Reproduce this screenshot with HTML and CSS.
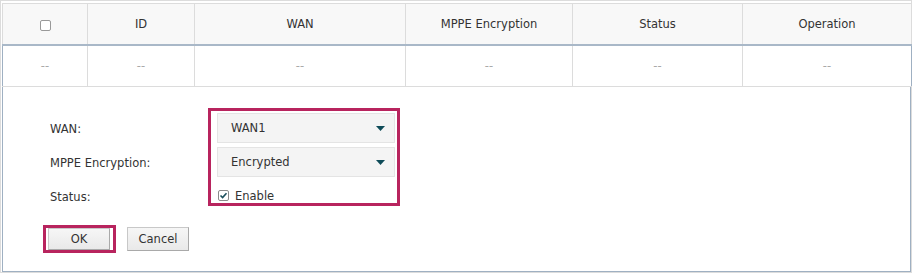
FILE: index.html
```html
<!DOCTYPE html>
<html lang="en">
<head>
    <meta charset="UTF-8">
    <title>PPTP Server</title>
    <link rel="stylesheet" href="styles.css">
</head>
<body>

    <div class="panel">
        <table class="grid">
            <colgroup>
                <col style="width: 85px">
                <col style="width: 107px">
                <col style="width: 211px">
                <col style="width: 167px">
                <col style="width: 170px">
                <col style="width: 169px">
            </colgroup>
            <thead>
                <tr>
                    <th><span class="checkbox"></span></th>
                    <th>ID</th>
                    <th>WAN</th>
                    <th>MPPE Encryption</th>
                    <th>Status</th>
                    <th>Operation</th>
                </tr>
            </thead>
            <tbody>
                <tr>
                    <td>--</td>
                    <td>--</td>
                    <td>--</td>
                    <td>--</td>
                    <td>--</td>
                    <td>--</td>
                </tr>
            </tbody>
        </table>

        <div class="editor">
            <div class="form-body">
                <div class="labels">
                    <div class="label-row">WAN:</div>
                    <div class="label-row">MPPE Encryption:</div>
                    <div class="label-row">Status:</div>
                </div>
                <div class="field-box">
                    <div class="select">
                        <span>WAN1</span>
                        <svg class="arrow" width="9" height="5" viewBox="0 0 9 5"><path d="M0 0H9L4.5 5Z" fill="#0e4b58"/></svg>
                    </div>
                    <div class="select">
                        <span>Encrypted</span>
                        <svg class="arrow" width="9" height="5" viewBox="0 0 9 5"><path d="M0 0H9L4.5 5Z" fill="#0e4b58"/></svg>
                    </div>
                    <label class="check-row">
                        <span class="checkbox checked">
                            <svg width="9" height="9" viewBox="0 0 9 9"><path d="M1.5 4.5L3.6 6.6L7.5 2.2" fill="none" stroke="#1b4f5c" stroke-width="1.6"/></svg>
                        </span>
                        Enable
                    </label>
                </div>
            </div>

            <div class="actions">
                <div class="ok-box">
                    <button type="button" class="btn">OK</button>
                </div>
                <button type="button" class="btn cancel">Cancel</button>
            </div>
        </div>
    </div>

</body>
</html>
```

FILE: styles.css
```css
body {
    margin: 0;
    font-family: "DejaVu Sans", Verdana, sans-serif;
    font-size: 11.5px;
    color: #333;
    background: #fff;
}
.panel {
    width: 912px;
    box-sizing: border-box;
    border: 1px solid #dcdcdc;
    padding: 2px 0 0 1px;
}
.grid {
    width: 909px;
    border-collapse: collapse;
    table-layout: fixed;
}
.grid th {
    height: 39px;
    padding: 0 0 1px;
    background: #f8f8f8;
    border: 1px solid #dcdcdc;
    border-bottom: 2px solid #a9b8c8;
    font-weight: normal;
    text-align: center;
    vertical-align: middle;
}
.grid td {
    height: 40px;
    padding: 0;
    border: 1px solid #dcdcdc;
    color: #aaa;
    text-align: center;
}
.grid td:first-child {
    border-left-color: #9fb0c2;
}
.grid td:last-child {
    border-right-color: #9fb0c2;
}
.checkbox {
    display: inline-block;
    width: 9px;
    height: 9px;
    border: 1px solid #999;
    border-radius: 2px;
    background: #fff;
    vertical-align: middle;
    position: relative;
    top: 1px;
}
.checkbox.checked {
    position: static;
    display: flex;
    align-items: center;
    justify-content: center;
    border-color: #8a8a8a;
    margin: 0 6px 2px 1px;
}
.editor {
    height: 185px;
    box-sizing: border-box;
    border: 1px solid #9fb0c2;
    border-top: none;
    padding: 21px 0 0 40px;
}
.form-body {
    display: flex;
    align-items: flex-start;
}
.labels {
    width: 158px;
    padding: 6px 0 0 7px;
}
.label-row {
    height: 30px;
    line-height: 30px;
    margin-bottom: 4px;
}
.label-row:last-child {
    margin-bottom: 0;
}
.field-box {
    width: 192px;
    box-sizing: border-box;
    border: 3px solid #b8245e;
    padding: 2px 2px 0 6px;
}
.select {
    height: 30px;
    box-sizing: border-box;
    border: 1px solid #e4e4e4;
    background: #f4f4f4;
    display: flex;
    align-items: center;
    justify-content: space-between;
    padding: 0 9px 0 13px;
    margin-bottom: 4px;
}
.check-row {
    height: 22px;
    display: flex;
    align-items: flex-end;
    line-height: 13px;
}
.actions {
    display: flex;
    align-items: center;
    margin-top: 13px;
}
.ok-box {
    border: 3px solid #b8245e;
    padding: 0 3px 0 2px;
    display: flex;
}
.btn {
    width: 62px;
    height: 22px;
    padding: 0;
    font-family: "DejaVu Sans", Verdana, sans-serif;
    font-size: 11.5px;
    color: #333;
    background: linear-gradient(#f6f6f6, #e9e9e9);
    border: 1px solid #c8c8c8;
    border-right-color: #a9a9a9;
    border-bottom-color: #a9a9a9;
}
.cancel {
    height: 24px;
    margin-left: 11px;
}
```
